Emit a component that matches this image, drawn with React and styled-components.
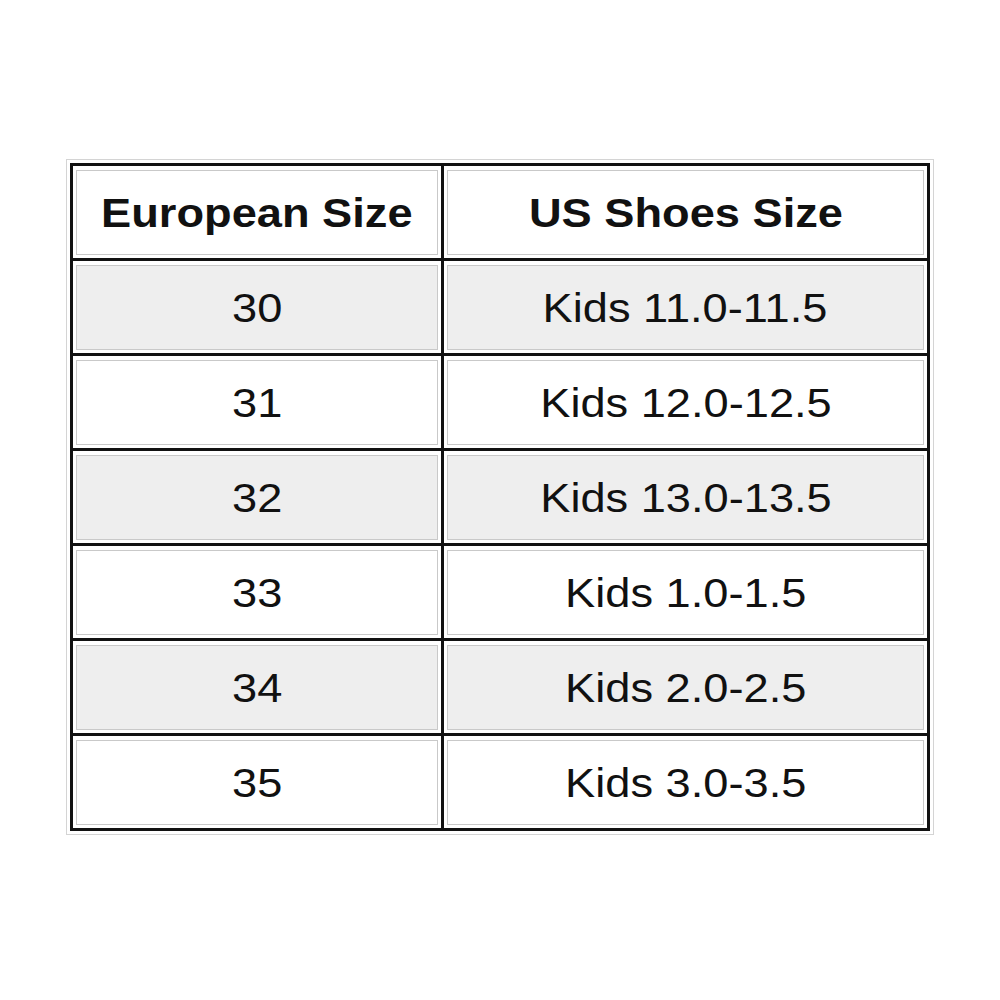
import React from "react";
import styled, { createGlobalStyle } from "styled-components";

const Global = createGlobalStyle`
  html, body { margin: 0; padding: 0; background: #ffffff; }
  body { font-family: "Liberation Sans", Arial, sans-serif; }
`;

const Page = styled.div`
  width: 1000px;
  height: 1000px;
  box-sizing: border-box;
  padding: 159px 0 0 66px;
  background: #ffffff;
`;

const Frame = styled.div`
  display: inline-block;
  border: 1px solid #d4d4d4;
  padding: 3px;
  background: #ffffff;
`;

const Table = styled.div`
  display: grid;
  grid-template-columns: 368px 483px;
  grid-auto-rows: 92px;
  gap: 3px;
  padding: 3px;
  background: #111111;
`;

const Cell = styled.div`
  background: #ffffff;
  padding: 4px 3px 3px 3px;
  box-sizing: border-box;
  display: flex;
`;

const Inner = styled.div`
  flex: 1;
  border: 1px solid #c9c9c9;
  background: ${(p) => (p.$shaded ? "#eeeeee" : "#ffffff")};
  display: flex;
  align-items: center;
  justify-content: center;
`;

const Text = styled.span`
  display: inline-block;
  font-family: "Liberation Sans", Arial, sans-serif;
  font-size: 40px;
  font-weight: ${(p) => (p.$bold ? 700 : 400)};
  color: #111111;
  transform: scaleX(1.13);
  white-space: nowrap;
  line-height: 1;
`;

const rows = [
  ["30", "Kids 11.0-11.5"],
  ["31", "Kids 12.0-12.5"],
  ["32", "Kids 13.0-13.5"],
  ["33", "Kids 1.0-1.5"],
  ["34", "Kids 2.0-2.5"],
  ["35", "Kids 3.0-3.5"],
];

export default function App() {
  return (
    <>
      <Global />
      <Page>
        <Frame>
          <Table>
            <Cell>
              <Inner>
                <Text $bold>European Size</Text>
              </Inner>
            </Cell>
            <Cell>
              <Inner>
                <Text $bold>US Shoes Size</Text>
              </Inner>
            </Cell>
            {rows.map(([eu, us], i) => (
              <React.Fragment key={eu}>
                <Cell>
                  <Inner $shaded={i % 2 === 0}>
                    <Text>{eu}</Text>
                  </Inner>
                </Cell>
                <Cell>
                  <Inner $shaded={i % 2 === 0}>
                    <Text>{us}</Text>
                  </Inner>
                </Cell>
              </React.Fragment>
            ))}
          </Table>
        </Frame>
      </Page>
    </>
  );
}
